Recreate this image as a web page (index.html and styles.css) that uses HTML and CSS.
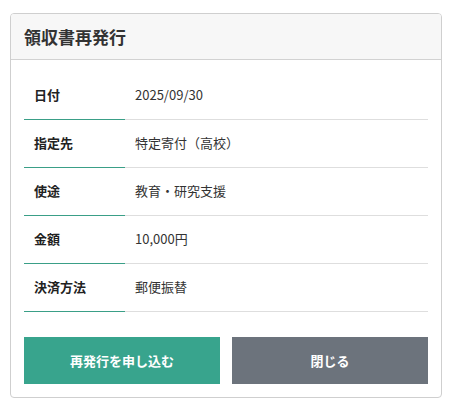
FILE: index.html
```html
<!DOCTYPE html>
<html lang="ja">
<head>
<meta charset="utf-8">
<title>領収書再発行</title>
<link rel="stylesheet" href="styles.css">
</head>
<body>
<div class="card">
  <div class="card-header"><h1 class="title">領収書再発行</h1></div>
  <div class="card-body">
    <table class="info">
      <tr><th>日付</th><td>2025/09/30</td></tr>
      <tr><th>指定先</th><td>特定寄付（高校）</td></tr>
      <tr><th>使途</th><td>教育・研究支援</td></tr>
      <tr><th>金額</th><td>10,000円</td></tr>
      <tr><th>決済方法</th><td>郵便振替</td></tr>
    </table>
    <div class="actions">
      <button class="btn btn-primary">再発行を申し込む</button>
      <button class="btn btn-secondary">閉じる</button>
    </div>
  </div>
</div>
</body>
</html>
```
FILE: styles.css
```css
* { box-sizing: border-box; }
html, body { margin: 0; padding: 0; background: #fff; }
body {
  font-family: "Noto Sans CJK JP", "Noto Sans", sans-serif;
  color: #333;
  padding: 13px 10px;
}
.card {
  border: 1px solid #cfcfcf;
  border-radius: 4px;
  overflow: hidden;
}
.card-header {
  background: #f7f7f7;
  border-bottom: 1px solid #d2d2d2;
  height: 46px;
  display: flex;
  align-items: center;
  padding: 0 13px;
}
.title {
  margin: 0;
  font-size: 17px;
  font-weight: 700;
  color: #333;
  line-height: 1;
}
.card-body {
  padding: 11px 13px 13px;
}
.info {
  width: 100%;
  border-collapse: collapse;
  table-layout: fixed;
}
.info th, .info td {
  height: 48px;
  padding: 0 10px;
  font-size: 13px;
  vertical-align: middle;
  text-align: left;
  line-height: 1.4;
}
.info th {
  width: 25%;
  font-weight: 700;
  color: #222;
  border-bottom: 1px solid #3a9f87;
}
.info td {
  font-weight: 400;
  color: #333;
  border-bottom: 1px solid #dedede;
}
.actions {
  display: flex;
  gap: 12px;
  margin-top: 25px;
}
.btn {
  flex: 1;
  height: 47px;
  border: 0;
  border-radius: 0;
  color: #fff;
  font-family: inherit;
  font-size: 13px;
  font-weight: 700;
  cursor: pointer;
}
.btn-primary { background: #38a48d; }
.btn-secondary { background: #6c737c; }
```
